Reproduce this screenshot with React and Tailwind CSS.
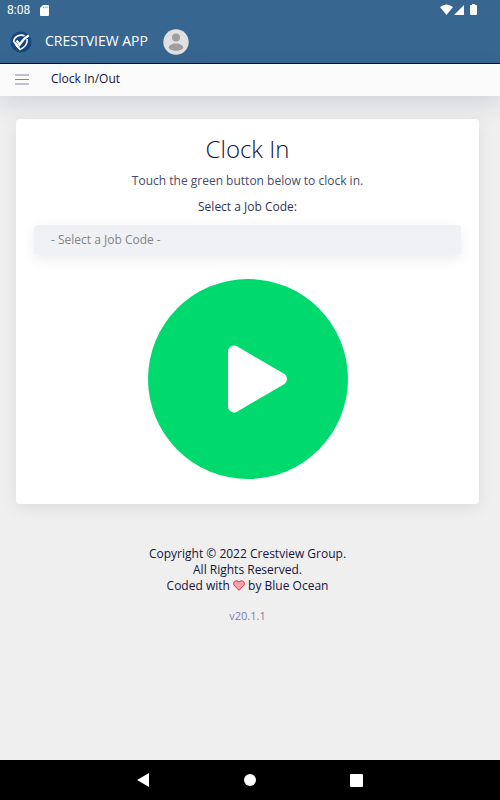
import { useState } from "react";

const LogoIcon = () => (
    <svg viewBox="0 0 22 22" className="h-[22px] w-[22px]" aria-hidden="true">
        <circle cx="11" cy="11" r="10.5" fill="#164580" />
        <path
            d="M14.6 4.8C10 2.9 4.2 5.4 3.6 10.4L10 18.6C14.4 16.8 17.6 12.6 17.2 8"
            fill="none"
            stroke="#fff"
            strokeWidth="1.6"
            strokeLinejoin="round" />
        <path d="M3.6 10.4C4.8 14 6.8 17 10 18.6C9.6 16.4 8 13 6 11Z" fill="#fff" />
        <path d="M6.4 9.6C7.6 10.6 8.6 12 9.6 13.8C11.6 10.2 14.4 7.2 18.8 4.4" fill="none" stroke="#fff" strokeWidth="2.2" />
    </svg>
)

const SdCardIcon = () => (
    <svg viewBox="0 0 9 11" className="h-[11px] w-[9px]" aria-hidden="true">
        <path d="M3 0H8Q9 0 9 1V10Q9 11 8 11H1Q0 11 0 10V3Z" fill="#fff" />
        <path d="M3.5 1.5V3.2M5.3 1.5V3.2M7.1 1.5V3.2" stroke="#376690" strokeWidth="0.6" />
    </svg>
)

const SystemIcons = () => (
    <svg viewBox="0 0 38 12" className="h-3 w-[38px]" fill="#fff" aria-hidden="true">
        <path d="M0 3Q6.5 -2 13 3L6.5 11Z" />
        <path d="M24 1V11H14Z" />
        <path d="M32 0H35V1H36Q37 1 37 2V10Q37 11 36 11H31Q30 11 30 10V2Q30 1 31 1H32Z" />
    </svg>
)

const AvatarIcon = () => (
    <svg viewBox="0 0 26 26" className="h-[26px] w-[26px]" aria-hidden="true">
        <circle cx="13" cy="13" r="12.7" fill="#e0e0e0" />
        <circle cx="13" cy="8.6" r="4" fill="#9e9e9e" />
        <ellipse cx="13" cy="18.2" rx="7.2" ry="3.6" fill="#9e9e9e" />
    </svg>
)

const MenuIcon = () => (
    <svg viewBox="0 0 14 11" className="h-[11px] w-[14px]" aria-hidden="true">
        <path d="M0 1H14M0 5.5H14M0 10H14" stroke="#8183ad" strokeWidth="1.2" />
    </svg>
)

const HeartIcon = () => (
    <svg viewBox="0 0 24 22" className="inline-block h-[11px] w-[12px] align-[-1px]" role="img" aria-label="love">
        <path
            d="M12 20.5L3 11.5C0.5 8.8 0.8 4.8 3.4 2.8C6 0.8 9.5 1.4 12 4.4C14.5 1.4 18 0.8 20.6 2.8C23.2 4.8 23.5 8.8 21 11.5Z"
            fill="#f2a3ab"
            stroke="#e8283f"
            strokeWidth="2" />
    </svg>
)

const PlayIcon = () => (
    <svg viewBox="0 0 200 200" className="h-full w-full" aria-hidden="true">
        <path d="M86 72.5L133 100L86 127.5Z" fill="#fff" stroke="#fff" strokeWidth="12" strokeLinejoin="round" />
    </svg>
)

const App = () => {

    const [jobCode, setjobCode] = useState("");

    return (
        <div className="flex min-h-screen flex-col bg-[#efefef] font-['Open_Sans',sans-serif] text-[#14143c]">
            <header className="border-b border-[#08083a] bg-[#376690] text-white">
                <div className="flex h-5 items-center justify-between pr-[22px] pl-[7px]">
                    <div className="flex items-center gap-[10px]">
                        <span className="font-[Roboto,sans-serif] text-[12px] leading-5">8:08</span>
                        <SdCardIcon />
                    </div>
                    <SystemIcons />
                </div>
                <div className="flex h-[43px] items-center pl-[10px]">
                    <LogoIcon />
                    <span className="ml-[13px] pb-[2px] text-[14px]">CRESTVIEW APP</span>
                    <button className="ml-[15px] cursor-pointer rounded-full" aria-label="Profile">
                        <AvatarIcon />
                    </button>
                </div>
            </header>

            <nav className="flex h-8 items-center gap-[22px] bg-[#fbfbfb] pb-[2px] pl-[15px] shadow-[0_8px_24px_#14286024]">
                <button className="cursor-pointer" aria-label="Menu">
                    <MenuIcon />
                </button>
                <span className="text-[12px]">Clock In/Out</span>
            </nav>

            <main className="flex-1 pt-[23px] pr-[21px] pl-4">
                <section className="flex flex-col items-center rounded bg-white px-[18px] pb-[25px] shadow-[0_4px_16px_#00000014]">
                    <h1 className="mt-3 text-[24px] leading-9 font-light">Clock In</h1>
                    <p className="mt-1 text-[12px] leading-5 text-[#4a4a65]">Touch the green button below to clock in.</p>
                    <label htmlFor="jobcode" className="mt-[6px] text-[12px] leading-5 text-[#33334f]">Select a Job Code:</label>
                    <select
                        id="jobcode"
                        value={jobCode}
                        onChange={(e) => setjobCode(e.target.value)}
                        className="mt-2 h-[30px] w-full appearance-none rounded bg-[#eff1f4] px-[17px] text-[12px] text-[#858585] shadow-[0_4px_14px_#00000014]">
                        <option value="">- Select a Job Code -</option>
                    </select>
                    <button className="mt-6 h-[200px] w-[200px] cursor-pointer rounded-full bg-[#00d96d]" aria-label="Clock in">
                        <PlayIcon />
                    </button>
                </section>

                <footer className="mt-[42px] text-center text-[12px] leading-4">
                    <p>Copyright © 2022 Crestview Group.</p>
                    <p>All Rights Reserved.</p>
                    <p>Coded with <HeartIcon /> by Blue Ocean</p>
                    <p className="mt-[14px] text-[11px] leading-4 text-[#7d7fa6]">v20.1.1</p>
                </footer>
            </main>

            <div className="flex h-10 items-center justify-center gap-[94px] bg-black">
                <button className="cursor-pointer" aria-label="Back">
                    <svg viewBox="0 0 13 14" className="h-[14px] w-[13px]"><path d="M0 7L12 0V14Z" fill="#fff" /></svg>
                </button>
                <button className="h-3 w-3 cursor-pointer rounded-full bg-white" aria-label="Home"></button>
                <button className="h-[13px] w-[13px] cursor-pointer rounded-[1px] bg-white" aria-label="Recent apps"></button>
            </div>
        </div>
    )
}

export default App
